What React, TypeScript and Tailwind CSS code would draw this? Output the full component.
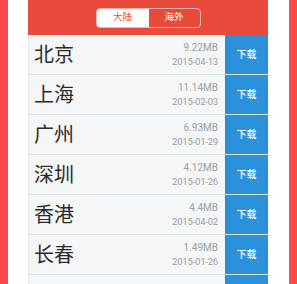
const cities = [
  { name: '北京', size: '9.22MB', date: '2015-04-13' },
  { name: '上海', size: '11.14MB', date: '2015-02-03' },
  { name: '广州', size: '6.93MB', date: '2015-01-29' },
  { name: '深圳', size: '4.12MB', date: '2015-01-26' },
  { name: '香港', size: '4.4MB', date: '2015-04-02' },
  { name: '长春', size: '1.49MB', date: '2015-01-26' },
  { name: '', size: '', date: '' },
];

export default function App() {
  return (
    <div
      className="w-[297px] h-[284px] overflow-hidden bg-[#fb4848] px-[8px] flex"
      style={{ fontFamily: 'Roboto, "Noto Sans CJK SC", sans-serif' }}
    >
      <div className="flex-1 bg-white px-[20px] flex">
        <div className="w-[240px] flex flex-col">
          {/* Header with tabs */}
          <div className="h-[35px] shrink-0 bg-[#e84b3b] flex items-center justify-center">
            <div className="flex h-[20px] rounded-[4px] border border-[#f3b3aa] overflow-hidden text-[9.5px]">
              <div className="w-[52px] bg-white text-[#e84b3b] flex items-center justify-center">大陆</div>
              <div className="w-[51px] text-white flex items-center justify-center">海外</div>
            </div>
          </div>

          {/* City list */}
          <div className="flex flex-col">
            {cities.map((c, i) => (
              <div key={i} className="h-[40px] shrink-0 flex border-b border-[#d9e3ea] bg-[#f5f7f7] border-l border-l-[#e0e6ea]">
                <div className="flex-1 flex items-center pl-[5px] pr-[7px]">
                  <span className="text-[20px] leading-none text-[#2b2b2b]">{c.name}</span>
                  <div className="ml-auto flex flex-col items-end text-[10px] leading-[14px] text-[#9aa0a4]">
                    <span>{c.size}</span>
                    <span className="text-[9.5px] tracking-[-0.2px]">{c.date}</span>
                  </div>
                </div>
                <div className="w-[43px] bg-[#2a91da] flex items-center justify-center text-white text-[10px] font-medium">
                  {c.name ? '下载' : ''}
                </div>
              </div>
            ))}
          </div>
        </div>
      </div>
    </div>
  );
}
